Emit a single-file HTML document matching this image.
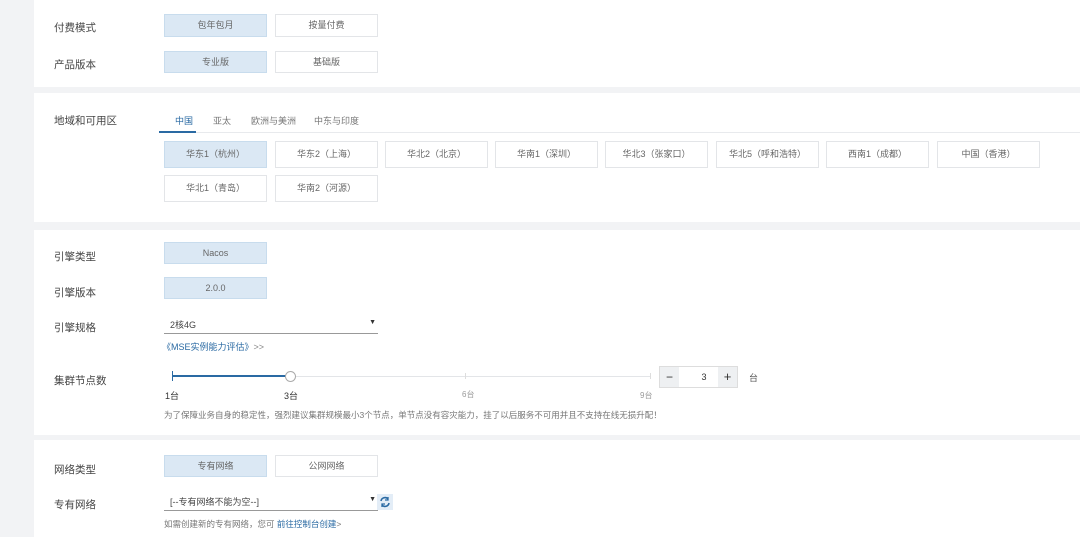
<!DOCTYPE html>
<html><head><meta charset="utf-8"><style>
*{margin:0;padding:0;box-sizing:border-box}
body{width:1080px;height:537px;background:#f2f3f5;font-family:"Liberation Sans","Noto Sans CJK SC",sans-serif;position:relative;overflow:hidden;color:#333}
.p{position:absolute;left:34px;right:0;background:#fff}
.a{position:absolute}
.lbl{position:absolute;left:54px;font-size:10.5px;color:#444}
.b{position:absolute;width:103px;height:23px;border:1px solid #e3e5e8;background:#fff;font-size:9px;color:#666;text-align:center;line-height:21px}
.b.s{background:#dbe8f4;border-color:#c8dced;color:#666}
.t{font-size:9px;color:#777}
</style></head><body>
<div class="p" style="top:0;height:87px"></div>
<div class="p" style="top:93px;height:129px"></div>
<div class="p" style="top:230px;height:205px"></div>
<div class="p" style="top:440px;height:97px"></div>

<div class="lbl" style="top:20px">付费模式</div>
<div class="b s" style="left:164px;top:14px">包年包月</div>
<div class="b" style="left:275px;top:14px">按量付费</div>
<div class="lbl" style="top:57px">产品版本</div>
<div class="b s" style="left:164px;top:51px;height:22px">专业版</div>
<div class="b" style="left:275px;top:51px;height:22px">基础版</div>

<div class="lbl" style="top:113px">地域和可用区</div>
<div class="a" style="left:164px;top:132px;width:916px;height:1px;background:#e8eaed"></div>
<div class="a" style="left:159px;top:131px;width:37px;height:2px;background:#2a6aa3"></div>
<div class="a t" style="left:175px;top:114px;color:#2a6aa3">中国</div>
<div class="a t" style="left:213px;top:114px">亚太</div>
<div class="a t" style="left:251px;top:114px">欧洲与美洲</div>
<div class="a t" style="left:314px;top:114px">中东与印度</div>
<div class="b s" style="left:164px;top:141px;height:27px;line-height:25px">华东1（杭州）</div>
<div class="b" style="left:275px;top:141px;height:27px;line-height:25px">华东2（上海）</div>
<div class="b" style="left:385px;top:141px;height:27px;line-height:25px">华北2（北京）</div>
<div class="b" style="left:495px;top:141px;height:27px;line-height:25px">华南1（深圳）</div>
<div class="b" style="left:605px;top:141px;height:27px;line-height:25px">华北3（张家口）</div>
<div class="b" style="left:716px;top:141px;height:27px;line-height:25px">华北5（呼和浩特）</div>
<div class="b" style="left:826px;top:141px;height:27px;line-height:25px">西南1（成都）</div>
<div class="b" style="left:937px;top:141px;height:27px;line-height:25px">中国（香港）</div>
<div class="b" style="left:164px;top:175px;height:27px;line-height:25px">华北1（青岛）</div>
<div class="b" style="left:275px;top:175px;height:27px;line-height:25px">华南2（河源）</div>

<div class="lbl" style="top:249px">引擎类型</div>
<div class="b s" style="left:164px;top:242px;height:22px">Nacos</div>
<div class="lbl" style="top:285px">引擎版本</div>
<div class="b s" style="left:164px;top:277px;height:22px">2.0.0</div>
<div class="lbl" style="top:320px">引擎规格</div>
<div class="a" style="left:164px;top:314px;width:214px;height:20px;border-bottom:1px solid #999;font-size:9px;padding:4px 0 0 6px;color:#444">2核4G<span style="position:absolute;right:2px;top:5px;font-size:7px;color:#333">▼</span></div>
<div class="a" style="left:162px;top:340px;font-size:9px;color:#2a6aa3">《MSE实例能力评估》<span style="color:#888">&gt;&gt;</span></div>
<div class="lbl" style="top:373px">集群节点数</div>
<div class="a" style="left:172px;top:376px;width:478px;height:1px;background:#e3e5e8"></div>
<div class="a" style="left:172px;top:375px;width:119px;height:2px;background:#2a6aa3"></div>
<div class="a" style="left:172px;top:371px;width:1px;height:10px;background:#2a6aa3"></div>
<div class="a" style="left:465px;top:373px;width:1px;height:6px;background:#ddd"></div>
<div class="a" style="left:650px;top:373px;width:1px;height:6px;background:#ddd"></div>
<div class="a" style="left:285px;top:371px;width:11px;height:11px;border-radius:50%;border:1px solid #aaa;background:#fff"></div>
<div class="a t" style="left:165px;top:389px;color:#333">1台</div>
<div class="a t" style="left:284px;top:389px;color:#333">3台</div>
<div class="a t" style="left:462px;top:389px;color:#999;font-size:8px">6台</div>
<div class="a t" style="left:640px;top:390px;color:#999;font-size:8px">9台</div>
<div class="a" style="left:659px;top:366px;width:79px;height:22px;border:1px solid #ddd;background:#fff"><div class="a" style="left:0;top:0;width:19px;height:20px;background:#eef0f2;text-align:center;line-height:20px;font-size:12px">−</div><div class="a" style="left:34px;top:0;width:20px;height:20px;text-align:center;line-height:20px;font-size:9px">3</div><div class="a" style="right:0;top:0;width:19px;height:20px;background:#eef0f2;text-align:center;line-height:20px;font-size:13px">+</div></div>
<div class="a t" style="left:749px;top:371px;color:#555">台</div>
<div class="a" style="left:164px;top:409px;font-size:8.5px;color:#777">为了保障业务自身的稳定性，强烈建议集群规模最小3个节点，单节点没有容灾能力，挂了以后服务不可用并且不支持在线无损升配！</div>

<div class="lbl" style="top:462px">网络类型</div>
<div class="b s" style="left:164px;top:455px;height:22px">专有网络</div>
<div class="b" style="left:275px;top:455px;height:22px">公网网络</div>
<div class="lbl" style="top:497px">专有网络</div>
<div class="a" style="left:164px;top:491px;width:214px;height:20px;border-bottom:1px solid #999;font-size:9px;padding:4px 0 0 6px;color:#444">[--专有网络不能为空--]<span style="position:absolute;right:2px;top:5px;font-size:7px;color:#333">▼</span></div>
<div class="a" style="left:377px;top:494px;width:16px;height:16px;background:#e3edf7"><svg width="16" height="16" viewBox="0 0 16 16"><path d="M4 7a4 4 0 0 1 7-2M12 9a4 4 0 0 1-7 2" stroke="#2a6aa3" stroke-width="1.6" fill="none"/><path d="M11 3v3h-3M5 13v-3h3" stroke="#2a6aa3" stroke-width="1.3" fill="none"/></svg></div>
<div class="a" style="left:164px;top:518px;font-size:8.5px;color:#777">如需创建新的专有网络，您可 <span style="color:#2a6aa3">前往控制台创建</span>&gt;</div>
</body></html>
